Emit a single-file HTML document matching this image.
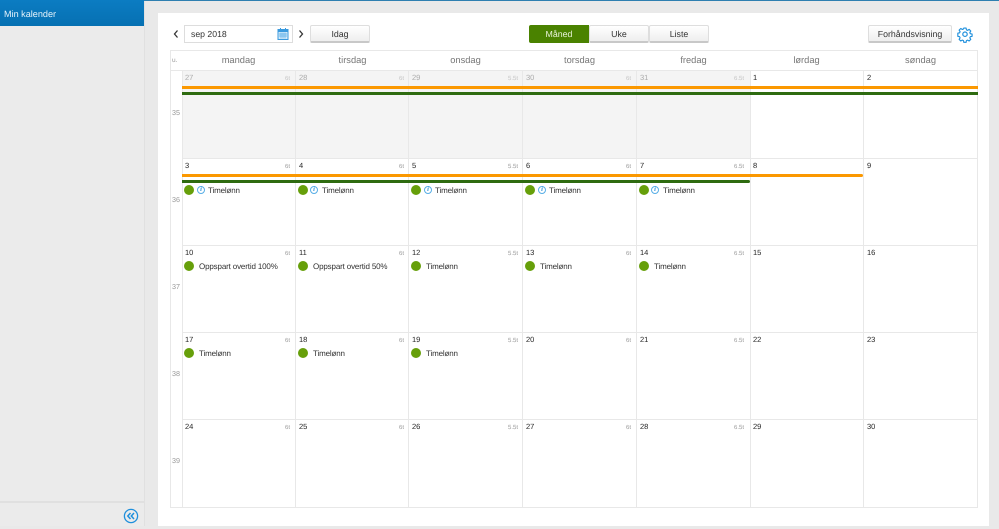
<!DOCTYPE html>
<html><head><meta charset="utf-8"><style>
html,body{margin:0;padding:0;width:999px;height:529px;overflow:hidden;background:#e9e9e9;font-family:"Liberation Sans",sans-serif;color:#333;text-rendering:geometricPrecision}
div{position:absolute;box-sizing:border-box}
#p{left:0;top:0;width:999px;height:529px;overflow:hidden;background:#e9e9e9;filter:blur(.35px)}
.t{white-space:nowrap;line-height:12px}
.v{width:1px;background:#e8e8e8;top:70px;height:437px}
.h{height:1px;background:#e8e8e8;left:170px;width:808px}
.s{background:#f4f4f4;top:71px;height:87px;width:113px}
.hd{top:51px;height:19px;line-height:19px;text-align:center;font-size:9.3px;color:#777;width:113px}
.d{font-size:7.5px;color:#222}
.g{color:#aaa}
.m{font-size:6px;color:#999;text-align:right;width:30px}
.mg{color:#c4c4c4}
.w{font-size:7.2px;color:#999;left:170px;width:12px;text-align:center}
.e{font-size:8px;letter-spacing:-.15px;color:#333;margin-top:.6px}
.c{width:10px;height:10px;border-radius:50%;background:#669f0a}
.i{width:8px;height:8px;border-radius:50%;border:1px solid #57aee6;font:italic bold 6.5px/6px "Liberation Serif",serif;color:#2a8fd6;text-align:center}
.b{background:linear-gradient(#fff,#eeeeee);border:1px solid #dedede;border-bottom:2px solid #c8c8c8;border-radius:2px;text-align:center;font-size:8.8px;color:#333;height:18px;line-height:16px;top:25px}
</style></head><body><div id="p">
<div style="left:0;top:0;width:999px;height:1px;background:#2e7fb0"></div>
<div style="left:0;top:1px;width:145px;height:525px;background:#ebebeb;border-right:1px solid #e0e0e0"></div>
<div style="left:0;top:0;width:144px;height:26px;background:linear-gradient(#0b7cc2,#0670b2)"></div>
<div class="t" style="left:4px;top:8px;font-size:9.1px;color:#e8f4fb">Min kalender</div>
<div style="left:0;top:501px;width:144px;height:2px;background:#e0e0e0"></div>
<svg style="position:absolute;left:123px;top:508px" width="16" height="16" viewBox="0 0 16 16"><circle cx="8" cy="8" r="6.6" fill="none" stroke="#1e8fdc" stroke-width="1.3"/><path d="M7.5 5 4.8 8l2.7 3M11 5 8.3 8l2.7 3" fill="none" stroke="#1e8fdc" stroke-width="1.5"/></svg>

<div style="left:158px;top:13px;width:831px;height:513px;background:#fff"></div>

<svg style="position:absolute;left:172px;top:29px" width="8" height="10" viewBox="0 0 8 10"><path d="M5.500 1.500 2.500 5l3 3.500" fill="none" stroke="#333" stroke-width="1.300"/></svg>
<div style="left:184px;top:25px;width:109px;height:18px;border:1px solid #ddd;background:#fff"></div>
<div class="t" style="left:191px;top:28px;font-size:8.7px">sep 2018</div>
<svg style="position:absolute;left:277px;top:28px" width="12" height="12" viewBox="0 0 12 12"><rect x="1" y="1.500" width="10" height="10" fill="#d3e9f9" stroke="#3a9ade"/><rect x="1" y="1.500" width="10" height="2.500" fill="#3a9ade"/><path d="M2 6h8M2 8h8M4 4.500v6M6 4.500v6M8 4.500v6" stroke="#5aaee8" stroke-width=".7"/><path d="M3.500 0v2M8.500 0v2" stroke="#3a9ade"/></svg>
<svg style="position:absolute;left:297px;top:29px" width="8" height="10" viewBox="0 0 8 10"><path d="M2.500 1.500 5.500 5l-3 3.500" fill="none" stroke="#333" stroke-width="1.300"/></svg>
<div class="b" style="left:310px;width:60px">Idag</div>

<div class="b" style="left:529px;width:60px;background:#4a8200;border:1px solid #4a8200;color:#e8f2d8;border-radius:2px 0 0 2px">Måned</div>
<div class="b" style="left:589px;width:60px">Uke</div>
<div class="b" style="left:649px;width:60px">Liste</div>
<div class="b" style="left:868px;width:84px">Forhåndsvisning</div>
<svg style="position:absolute;left:957px;top:26px" width="16" height="17" viewBox="0 0 16 17"><path d="M6.700 1h2.600l.4 2 1.300.6 1.800-1.100 1.900 1.900-1.100 1.800.6 1.300 2 .4v2.600l-2 .4-.6 1.300 1.100 1.800-1.900 1.900-1.800-1.100-1.300.6-.4 2H6.700l-.4-2-1.300-.6-1.800 1.100-1.900-1.900 1.100-1.800-.6-1.300-2-.4V6.900l2-.4.6-1.300-1.100-1.800 1.900-1.900 1.800 1.100 1.300-.6z" transform="translate(1 1.200) scale(.87)" fill="none" stroke="#1e8fdc" stroke-width="1.300" stroke-linejoin="round"/><circle cx="8" cy="8.200" r="2.200" fill="none" stroke="#1e8fdc" stroke-width="1.200"/></svg>

<div class="s" style="left:182px"></div><div class="s" style="left:296px"></div><div class="s" style="left:409px"></div><div class="s" style="left:523px"></div><div class="s" style="left:637px"></div>

<div class="h" style="top:50px"></div><div class="h" style="top:70px"></div>
<div class="h" style="top:158px;left:182px;width:796px"></div><div class="h" style="top:245px;left:182px;width:796px"></div><div class="h" style="top:332px;left:182px;width:796px"></div><div class="h" style="top:419px;left:182px;width:796px"></div><div class="h" style="top:507px"></div>
<div class="v" style="left:170px;top:50px;height:457px"></div><div class="v" style="left:182px"></div><div class="v" style="left:295px"></div><div class="v" style="left:408px"></div><div class="v" style="left:522px"></div><div class="v" style="left:636px"></div><div class="v" style="left:750px"></div><div class="v" style="left:863px"></div><div class="v" style="left:977px;top:50px;height:457px"></div>

<div class="t" style="left:172px;top:55px;font-size:6.500px;color:#999">u.</div>
<div class="hd" style="left:182px">mandag</div><div class="hd" style="left:296px">tirsdag</div><div class="hd" style="left:409px">onsdag</div><div class="hd" style="left:523px">torsdag</div><div class="hd" style="left:637px">fredag</div><div class="hd" style="left:750px">lørdag</div><div class="hd" style="left:864px">søndag</div>

<div class="t w" style="top:107px">35</div><div class="t w" style="top:194px">36</div><div class="t w" style="top:281px">37</div><div class="t w" style="top:368px">38</div><div class="t w" style="top:455px">39</div>

<div class="t d g" style="left:185px;top:72px">27</div><div class="t m mg" style="left:260px;top:73px">6t</div>
<div class="t d g" style="left:299px;top:72px">28</div><div class="t m mg" style="left:374px;top:73px">6t</div>
<div class="t d g" style="left:412px;top:72px">29</div><div class="t m mg" style="left:488px;top:73px">5.5t</div>
<div class="t d g" style="left:526px;top:72px">30</div><div class="t m mg" style="left:601px;top:73px">6t</div>
<div class="t d g" style="left:640px;top:72px">31</div><div class="t m mg" style="left:714px;top:73px">6.5t</div>
<div class="t d" style="left:753px;top:72px">1</div><div class="t d" style="left:867px;top:72px">2</div>

<div class="t d" style="left:185px;top:160px">3</div><div class="t m" style="left:260px;top:161px">6t</div>
<div class="t d" style="left:299px;top:160px">4</div><div class="t m" style="left:374px;top:161px">6t</div>
<div class="t d" style="left:412px;top:160px">5</div><div class="t m" style="left:488px;top:161px">5.5t</div>
<div class="t d" style="left:526px;top:160px">6</div><div class="t m" style="left:601px;top:161px">6t</div>
<div class="t d" style="left:640px;top:160px">7</div><div class="t m" style="left:714px;top:161px">6.5t</div>
<div class="t d" style="left:753px;top:160px">8</div><div class="t d" style="left:867px;top:160px">9</div>

<div class="t d" style="left:185px;top:247px">10</div><div class="t m" style="left:260px;top:248px">6t</div>
<div class="t d" style="left:299px;top:247px">11</div><div class="t m" style="left:374px;top:248px">6t</div>
<div class="t d" style="left:412px;top:247px">12</div><div class="t m" style="left:488px;top:248px">5.5t</div>
<div class="t d" style="left:526px;top:247px">13</div><div class="t m" style="left:601px;top:248px">6t</div>
<div class="t d" style="left:640px;top:247px">14</div><div class="t m" style="left:714px;top:248px">6.5t</div>
<div class="t d" style="left:753px;top:247px">15</div><div class="t d" style="left:867px;top:247px">16</div>

<div class="t d" style="left:185px;top:334px">17</div><div class="t m" style="left:260px;top:335px">6t</div>
<div class="t d" style="left:299px;top:334px">18</div><div class="t m" style="left:374px;top:335px">6t</div>
<div class="t d" style="left:412px;top:334px">19</div><div class="t m" style="left:488px;top:335px">5.5t</div>
<div class="t d" style="left:526px;top:334px">20</div><div class="t m" style="left:601px;top:335px">6t</div>
<div class="t d" style="left:640px;top:334px">21</div><div class="t m" style="left:714px;top:335px">6.5t</div>
<div class="t d" style="left:753px;top:334px">22</div><div class="t d" style="left:867px;top:334px">23</div>

<div class="t d" style="left:185px;top:421px">24</div><div class="t m" style="left:260px;top:422px">6t</div>
<div class="t d" style="left:299px;top:421px">25</div><div class="t m" style="left:374px;top:422px">6t</div>
<div class="t d" style="left:412px;top:421px">26</div><div class="t m" style="left:488px;top:422px">5.5t</div>
<div class="t d" style="left:526px;top:421px">27</div><div class="t m" style="left:601px;top:422px">6t</div>
<div class="t d" style="left:640px;top:421px">28</div><div class="t m" style="left:714px;top:422px">6.5t</div>
<div class="t d" style="left:753px;top:421px">29</div><div class="t d" style="left:867px;top:421px">30</div>

<div style="left:182px;top:86px;width:796px;height:3px;background:#fb9800"></div>
<div style="left:182px;top:92px;width:796px;height:3px;background:#2e6b10"></div>
<div style="left:182px;top:174px;width:681px;height:3px;background:#fb9800;border-radius:0 2px 2px 0"></div>
<div style="left:182px;top:179.500px;width:568px;height:3px;background:#2e6b10;border-radius:0 2px 2px 0"></div>

<div class="c" style="left:184px;top:185px"></div><div class="i" style="left:197px;top:186px">i</div><div class="t e" style="left:208px;top:184px">Timelønn</div>
<div class="c" style="left:298px;top:185px"></div><div class="i" style="left:310px;top:186px">i</div><div class="t e" style="left:322px;top:184px">Timelønn</div>
<div class="c" style="left:411px;top:185px"></div><div class="i" style="left:424px;top:186px">i</div><div class="t e" style="left:435px;top:184px">Timelønn</div>
<div class="c" style="left:525px;top:185px"></div><div class="i" style="left:538px;top:186px">i</div><div class="t e" style="left:549px;top:184px">Timelønn</div>
<div class="c" style="left:639px;top:185px"></div><div class="i" style="left:651px;top:186px">i</div><div class="t e" style="left:663px;top:184px">Timelønn</div>

<div class="c" style="left:184px;top:261px"></div><div class="t e" style="left:199px;top:260px">Oppspart overtid 100%</div>
<div class="c" style="left:298px;top:261px"></div><div class="t e" style="left:313px;top:260px">Oppspart overtid 50%</div>
<div class="c" style="left:411px;top:261px"></div><div class="t e" style="left:426px;top:260px">Timelønn</div>
<div class="c" style="left:525px;top:261px"></div><div class="t e" style="left:540px;top:260px">Timelønn</div>
<div class="c" style="left:639px;top:261px"></div><div class="t e" style="left:654px;top:260px">Timelønn</div>

<div class="c" style="left:184px;top:348px"></div><div class="t e" style="left:199px;top:347px">Timelønn</div>
<div class="c" style="left:298px;top:348px"></div><div class="t e" style="left:313px;top:347px">Timelønn</div>
<div class="c" style="left:411px;top:348px"></div><div class="t e" style="left:426px;top:347px">Timelønn</div>
</div></body></html>
